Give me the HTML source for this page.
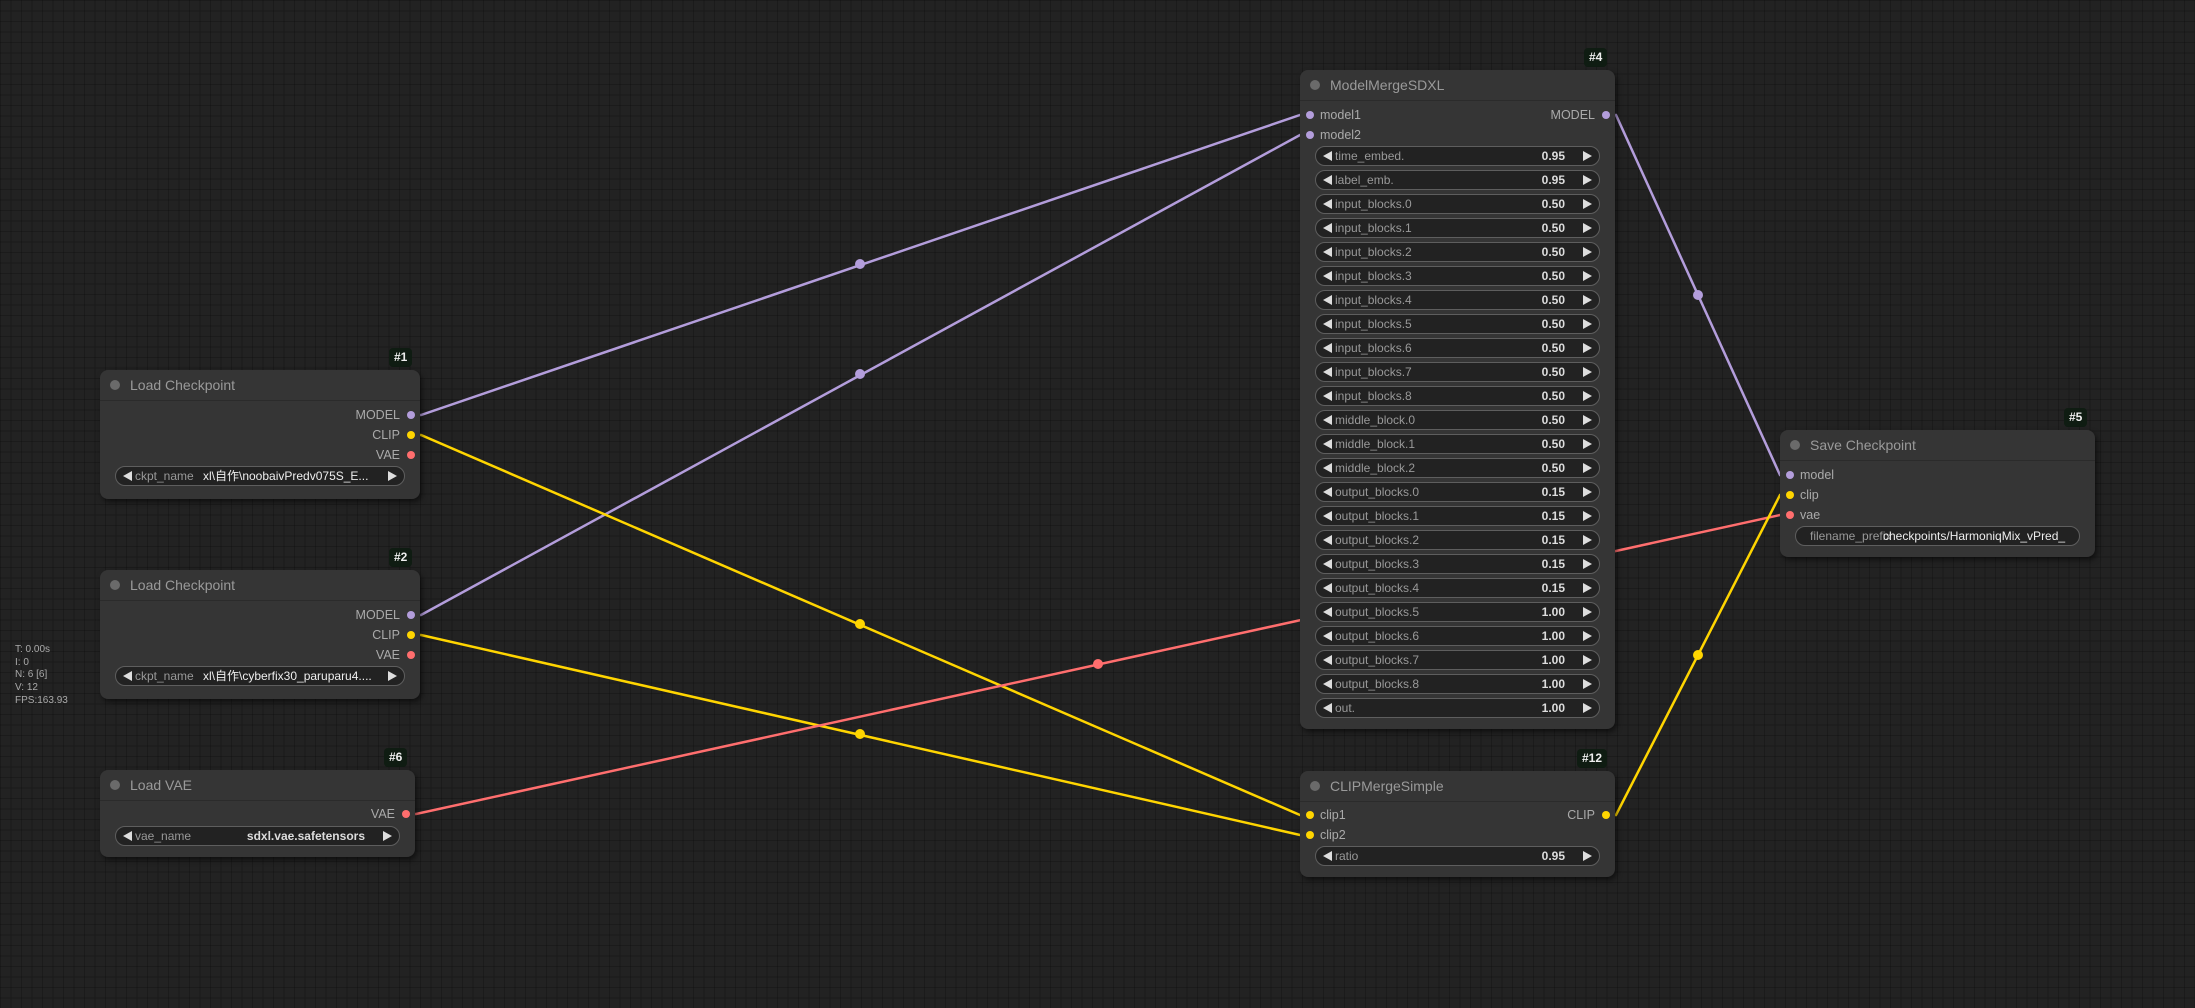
<!DOCTYPE html>
<html><head><meta charset="utf-8"><style>
html,body{margin:0;padding:0}
body{width:2195px;height:1008px;overflow:hidden;position:relative;background-color:#222;
background-image:linear-gradient(rgba(0,0,0,0.2) 1px,transparent 1px),linear-gradient(90deg,rgba(0,0,0,0.2) 1px,transparent 1px);
background-size:10.5px 10.5px,10.5px 10.5px;
font-family:"Liberation Sans","Noto Sans CJK JP",sans-serif;}
svg{position:absolute;left:0;top:0}
.n{position:absolute;background:#353535;border-radius:8px;box-shadow:2px 3px 6px rgba(0,0,0,0.55)}
.hd{position:absolute;left:0;right:0;top:0;height:30px;border-bottom:1px solid #2b2b2b}
.hd i{position:absolute;left:10px;top:10px;width:10px;height:10px;border-radius:50%;background:#6a6a6a}
.hd span{position:absolute;left:30px;top:7px;font-size:14px;color:#9a9a9a}
.b{position:absolute;height:19px;padding:0 5px;background:#0f1c12;color:#eee;font-weight:bold;font-size:12px;line-height:19px;border-radius:4px}
.o{position:absolute;right:20px;font-size:12.5px;color:#aaa;line-height:14px}
.i{position:absolute;left:20px;font-size:12.5px;color:#aaa;line-height:14px}
.d{position:absolute;width:8px;height:8px;border-radius:50%}
.w{position:absolute;height:18px;background:#222;border:1px solid #5e5e5e;border-radius:10px;font-size:12px;line-height:18px;color:#999;overflow:hidden;white-space:nowrap}
.w span{position:absolute;top:0;height:18px;line-height:18px}
.w .l{left:19px}
.w .v{right:34px;color:#ddd;font-weight:bold}
.w .a,.w .c{top:4px;width:0;height:0;border-top:5px solid transparent;border-bottom:5px solid transparent}
.w .a{left:7px;border-right:9px solid #ddd}
.w .c{right:7px;border-left:9px solid #ddd}
.st{position:absolute;left:15px;top:644px;font-size:10px;line-height:12.7px;color:#aaa}
</style></head><body>
<svg width="2195" height="1008">
<g fill="none" stroke-width="2.5">
<path d="M411 415 L421 415 L1300 115 L1310 115" stroke="#b39ddb"/>
<path d="M411 615 L421 615 L1300 135 L1310 135" stroke="#b39ddb"/>
<path d="M411 435 L421 435 L1300 815 L1310 815" stroke="#ffd500"/>
<path d="M411 635 L421 635 L1300 835 L1310 835" stroke="#ffd500"/>
<path d="M406 814 L416 814 L1780 515 L1790 515" stroke="#ff6e6e"/>
<path d="M1606 115 L1616 115 L1780 475 L1790 475" stroke="#b39ddb"/>
<path d="M1606 815 L1616 815 L1780 495 L1790 495" stroke="#ffd500"/>
</g>
<circle cx="860" cy="264" r="5" fill="#b39ddb"/>
<circle cx="860" cy="374" r="5" fill="#b39ddb"/>
<circle cx="860" cy="624" r="5" fill="#ffd500"/>
<circle cx="860" cy="734" r="5" fill="#ffd500"/>
<circle cx="1098" cy="664" r="5" fill="#ff6e6e"/>
<circle cx="1698" cy="295" r="5" fill="#b39ddb"/>
<circle cx="1698" cy="655" r="5" fill="#ffd500"/>
</svg>

<div class="st">T: 0.00s<br>I: 0<br>N: 6 [6]<br>V: 12<br>FPS:163.93</div>

<div class="b" style="left:389px;top:348px">#1</div>
<div class="n" style="left:100px;top:370px;width:320px;height:129px">
<div class="hd"><i></i><span>Load Checkpoint</span></div>
<div class="o" style="top:38px">MODEL</div><div class="d" style="right:5px;top:41px;background:#b39ddb"></div>
<div class="o" style="top:58px">CLIP</div><div class="d" style="right:5px;top:61px;background:#ffd500"></div>
<div class="o" style="top:78px">VAE</div><div class="d" style="right:5px;top:81px;background:#ff6e6e"></div>
<div class="w" style="left:15px;top:96px;width:288px"><span class="a"></span><span class="l">ckpt_name</span><span class="l" style="left:87px;color:#eee">xl\自作\noobaivPredv075S_E...</span><span class="c"></span></div>
</div>

<div class="b" style="left:389px;top:548px">#2</div>
<div class="n" style="left:100px;top:570px;width:320px;height:129px">
<div class="hd"><i></i><span>Load Checkpoint</span></div>
<div class="o" style="top:38px">MODEL</div><div class="d" style="right:5px;top:41px;background:#b39ddb"></div>
<div class="o" style="top:58px">CLIP</div><div class="d" style="right:5px;top:61px;background:#ffd500"></div>
<div class="o" style="top:78px">VAE</div><div class="d" style="right:5px;top:81px;background:#ff6e6e"></div>
<div class="w" style="left:15px;top:96px;width:288px"><span class="a"></span><span class="l">ckpt_name</span><span class="l" style="left:87px;color:#eee">xl\自作\cyberfix30_paruparu4....</span><span class="c"></span></div>
</div>

<div class="b" style="left:384px;top:748px">#6</div>
<div class="n" style="left:100px;top:770px;width:315px;height:87px">
<div class="hd"><i></i><span>Load VAE</span></div>
<div class="o" style="top:37px">VAE</div><div class="d" style="right:5px;top:40px;background:#ff6e6e"></div>
<div class="w" style="left:15px;top:56px;width:283px"><span class="a"></span><span class="l">vae_name</span><span class="v">sdxl.vae.safetensors</span><span class="c"></span></div>
</div>

<div class="b" style="left:1584px;top:48px">#4</div>
<div class="n" style="left:1300px;top:70px;width:315px;height:659px">
<div class="hd"><i></i><span>ModelMergeSDXL</span></div>
<div class="d" style="left:6px;top:41px;background:#b39ddb"></div><div class="i" style="top:38px">model1</div>
<div class="d" style="left:6px;top:61px;background:#b39ddb"></div><div class="i" style="top:58px">model2</div>
<div class="o" style="top:38px">MODEL</div><div class="d" style="right:5px;top:41px;background:#b39ddb"></div>
<div class="w" style="left:15px;top:76px;width:283px"><span class="a"></span><span class="l">time_embed.</span><span class="v">0.95</span><span class="c"></span></div>
<div class="w" style="left:15px;top:100px;width:283px"><span class="a"></span><span class="l">label_emb.</span><span class="v">0.95</span><span class="c"></span></div>
<div class="w" style="left:15px;top:124px;width:283px"><span class="a"></span><span class="l">input_blocks.0</span><span class="v">0.50</span><span class="c"></span></div>
<div class="w" style="left:15px;top:148px;width:283px"><span class="a"></span><span class="l">input_blocks.1</span><span class="v">0.50</span><span class="c"></span></div>
<div class="w" style="left:15px;top:172px;width:283px"><span class="a"></span><span class="l">input_blocks.2</span><span class="v">0.50</span><span class="c"></span></div>
<div class="w" style="left:15px;top:196px;width:283px"><span class="a"></span><span class="l">input_blocks.3</span><span class="v">0.50</span><span class="c"></span></div>
<div class="w" style="left:15px;top:220px;width:283px"><span class="a"></span><span class="l">input_blocks.4</span><span class="v">0.50</span><span class="c"></span></div>
<div class="w" style="left:15px;top:244px;width:283px"><span class="a"></span><span class="l">input_blocks.5</span><span class="v">0.50</span><span class="c"></span></div>
<div class="w" style="left:15px;top:268px;width:283px"><span class="a"></span><span class="l">input_blocks.6</span><span class="v">0.50</span><span class="c"></span></div>
<div class="w" style="left:15px;top:292px;width:283px"><span class="a"></span><span class="l">input_blocks.7</span><span class="v">0.50</span><span class="c"></span></div>
<div class="w" style="left:15px;top:316px;width:283px"><span class="a"></span><span class="l">input_blocks.8</span><span class="v">0.50</span><span class="c"></span></div>
<div class="w" style="left:15px;top:340px;width:283px"><span class="a"></span><span class="l">middle_block.0</span><span class="v">0.50</span><span class="c"></span></div>
<div class="w" style="left:15px;top:364px;width:283px"><span class="a"></span><span class="l">middle_block.1</span><span class="v">0.50</span><span class="c"></span></div>
<div class="w" style="left:15px;top:388px;width:283px"><span class="a"></span><span class="l">middle_block.2</span><span class="v">0.50</span><span class="c"></span></div>
<div class="w" style="left:15px;top:412px;width:283px"><span class="a"></span><span class="l">output_blocks.0</span><span class="v">0.15</span><span class="c"></span></div>
<div class="w" style="left:15px;top:436px;width:283px"><span class="a"></span><span class="l">output_blocks.1</span><span class="v">0.15</span><span class="c"></span></div>
<div class="w" style="left:15px;top:460px;width:283px"><span class="a"></span><span class="l">output_blocks.2</span><span class="v">0.15</span><span class="c"></span></div>
<div class="w" style="left:15px;top:484px;width:283px"><span class="a"></span><span class="l">output_blocks.3</span><span class="v">0.15</span><span class="c"></span></div>
<div class="w" style="left:15px;top:508px;width:283px"><span class="a"></span><span class="l">output_blocks.4</span><span class="v">0.15</span><span class="c"></span></div>
<div class="w" style="left:15px;top:532px;width:283px"><span class="a"></span><span class="l">output_blocks.5</span><span class="v">1.00</span><span class="c"></span></div>
<div class="w" style="left:15px;top:556px;width:283px"><span class="a"></span><span class="l">output_blocks.6</span><span class="v">1.00</span><span class="c"></span></div>
<div class="w" style="left:15px;top:580px;width:283px"><span class="a"></span><span class="l">output_blocks.7</span><span class="v">1.00</span><span class="c"></span></div>
<div class="w" style="left:15px;top:604px;width:283px"><span class="a"></span><span class="l">output_blocks.8</span><span class="v">1.00</span><span class="c"></span></div>
<div class="w" style="left:15px;top:628px;width:283px"><span class="a"></span><span class="l">out.</span><span class="v">1.00</span><span class="c"></span></div>
</div>

<div class="b" style="left:1577px;top:749px">#12</div>
<div class="n" style="left:1300px;top:771px;width:315px;height:106px">
<div class="hd"><i></i><span>CLIPMergeSimple</span></div>
<div class="d" style="left:6px;top:40px;background:#ffd500"></div><div class="i" style="top:37px">clip1</div>
<div class="d" style="left:6px;top:60px;background:#ffd500"></div><div class="i" style="top:57px">clip2</div>
<div class="o" style="top:37px">CLIP</div><div class="d" style="right:5px;top:40px;background:#ffd500"></div>
<div class="w" style="left:15px;top:75px;width:283px"><span class="a"></span><span class="l">ratio</span><span class="v">0.95</span><span class="c"></span></div>
</div>

<div class="b" style="left:2064px;top:408px">#5</div>
<div class="n" style="left:1780px;top:430px;width:315px;height:127px">
<div class="hd"><i></i><span>Save Checkpoint</span></div>
<div class="d" style="left:6px;top:41px;background:#b39ddb"></div><div class="i" style="top:38px">model</div>
<div class="d" style="left:6px;top:61px;background:#ffd500"></div><div class="i" style="top:58px">clip</div>
<div class="d" style="left:6px;top:81px;background:#ff6e6e"></div><div class="i" style="top:78px">vae</div>
<div class="w" style="left:15px;top:96px;width:283px"><span class="l" style="left:14px">filename_prefix</span><span class="l" style="left:87px;color:#eee">checkpoints/HarmoniqMix_vPred_</span></div>
</div>
</body></html>
